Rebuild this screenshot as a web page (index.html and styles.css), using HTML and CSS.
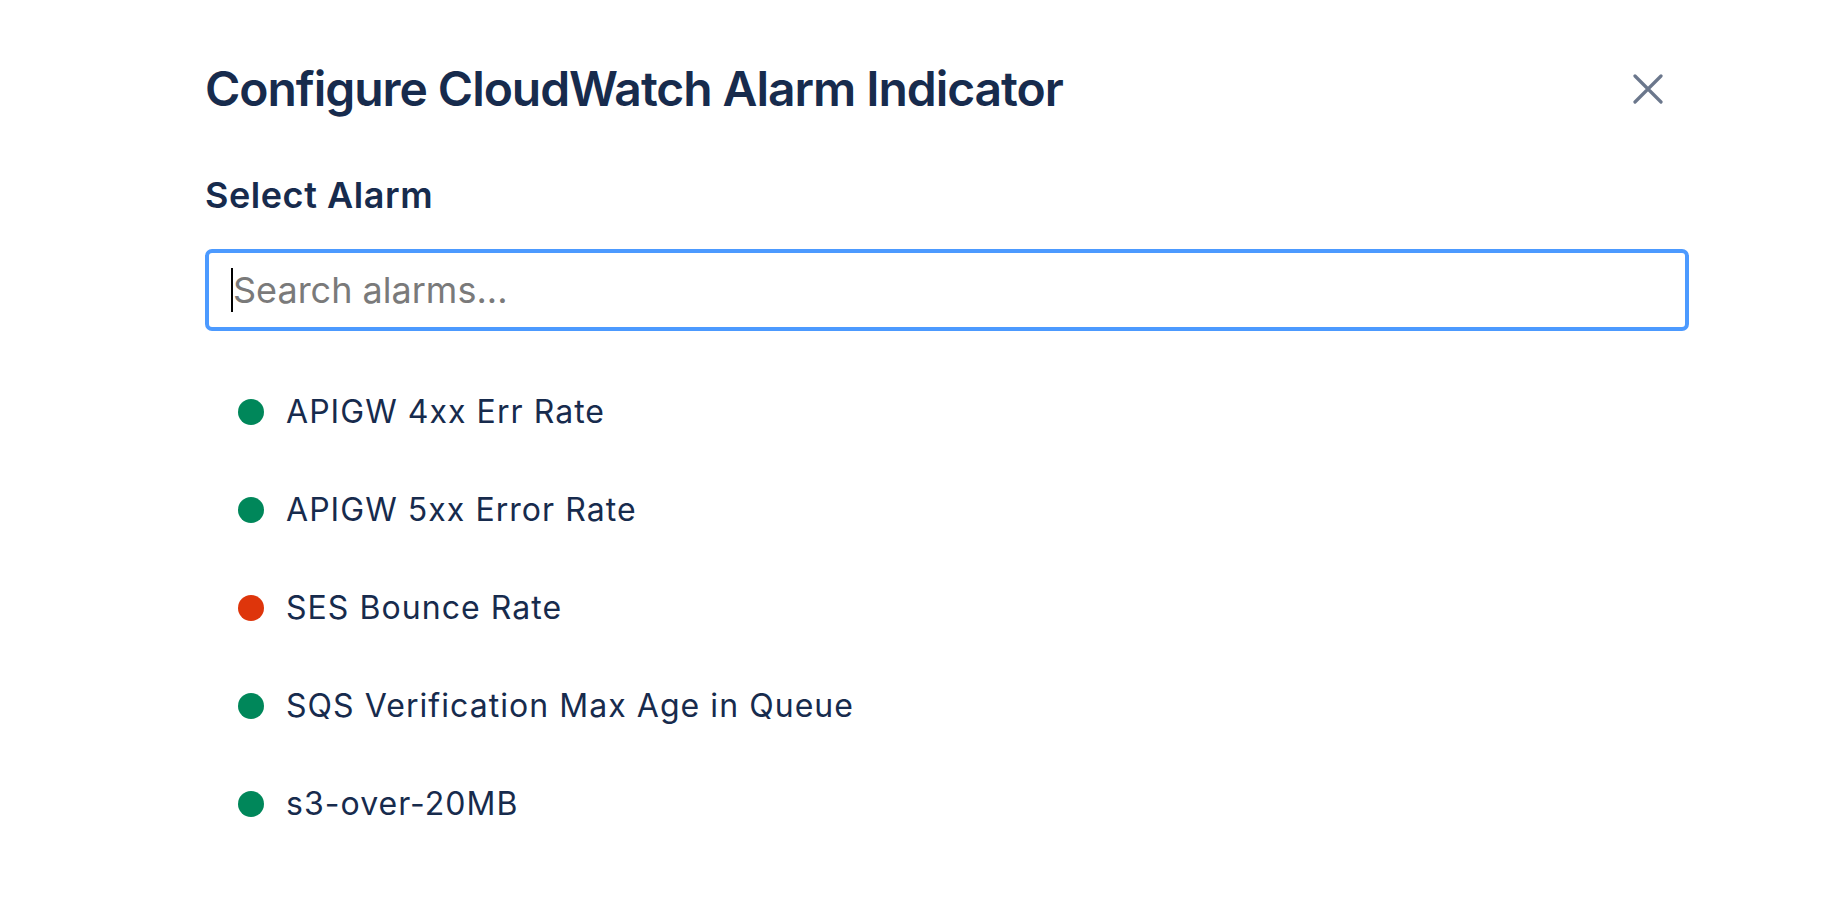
FILE: index.html
```html
<!DOCTYPE html>
<html lang="en">
<head>
<meta charset="utf-8">
<title>Configure CloudWatch Alarm Indicator</title>
<link rel="stylesheet" href="styles.css">
</head>
<body>
<div class="dialog">
  <header class="dialog-header">
    <h1 class="dialog-title">Configure CloudWatch Alarm Indicator</h1>
    <button class="close-btn" type="button" aria-label="Close">
      <svg width="30" height="30" viewBox="0 0 30 30" aria-hidden="true">
        <path d="M2 2 L28 28 M28 2 L2 28" stroke="currentColor" stroke-width="3.2" stroke-linecap="round" fill="none"/>
      </svg>
    </button>
  </header>
  <label class="field-label" for="alarm-search">Select Alarm</label>
  <div class="search-wrap">
    <input id="alarm-search" class="search-input" type="text" placeholder="Search alarms...">
    <span class="caret"></span>
  </div>
  <ul class="alarm-list">
    <li class="alarm"><span class="dot ok"></span><span class="alarm-name">APIGW 4xx Err Rate</span></li>
    <li class="alarm"><span class="dot ok"></span><span class="alarm-name">APIGW 5xx Error Rate</span></li>
    <li class="alarm"><span class="dot alarmed"></span><span class="alarm-name">SES Bounce Rate</span></li>
    <li class="alarm"><span class="dot ok"></span><span class="alarm-name">SQS Verification Max Age in Queue</span></li>
    <li class="alarm"><span class="dot ok"></span><span class="alarm-name">s3-over-20MB</span></li>
  </ul>
</div>
</body>
</html>
```

FILE: styles.css
```css
* { box-sizing: border-box; }

html, body {
  margin: 0;
  padding: 0;
  background: #ffffff;
}

body {
  font-family: Inter, "Noto Sans", "DejaVu Sans", sans-serif;
  color: #172b4d;
}

.dialog {
  width: 1484px;
  margin-left: 205px;
  padding-top: 60px;
  display: flex;
  flex-direction: column;
}

.dialog-header {
  display: flex;
  align-items: center;
  justify-content: space-between;
}

.dialog-title {
  margin: 0;
  font-size: 48px;
  line-height: 58px;
  font-weight: 600;
  letter-spacing: -1.05px;
  color: #172b4d;
}

.close-btn {
  width: 48px;
  height: 48px;
  margin-right: 17px;
  padding: 0;
  border: 0;
  background: transparent;
  color: #6b778c;
  display: flex;
  align-items: center;
  justify-content: center;
  cursor: pointer;
}

.field-label {
  margin-top: 55px;
  font-size: 36px;
  line-height: 44px;
  font-weight: 600;
  letter-spacing: 0.55px;
  color: #172b4d;
}

.search-wrap {
  position: relative;
  margin-top: 32px;
}

.search-input {
  display: block;
  width: 100%;
  height: 82px;
  padding: 0 24px;
  border: 4px solid #4c9aff;
  border-radius: 7px;
  outline: none;
  font-family: inherit;
  font-size: 36px;
  color: #172b4d;
  background: #ffffff;
}

.search-input::placeholder {
  color: #7a7a7a;
  opacity: 1;
}

.caret {
  position: absolute;
  left: 26px;
  top: 19px;
  width: 2px;
  height: 44px;
  background: #000000;
}

.alarm-list {
  list-style: none;
  margin: 32px 0 0;
  padding: 0 0 0 33px;
}

.alarm {
  height: 98px;
  display: flex;
  align-items: center;
  gap: 22px;
}

.dot {
  width: 26px;
  height: 26px;
  border-radius: 50%;
  flex: none;
}

.dot.ok { background: #00875a; }
.dot.alarmed { background: #de350b; }

.alarm-name {
  font-size: 32px;
  line-height: 38px;
  letter-spacing: 1.05px;
  color: #172b4d;
}
```
